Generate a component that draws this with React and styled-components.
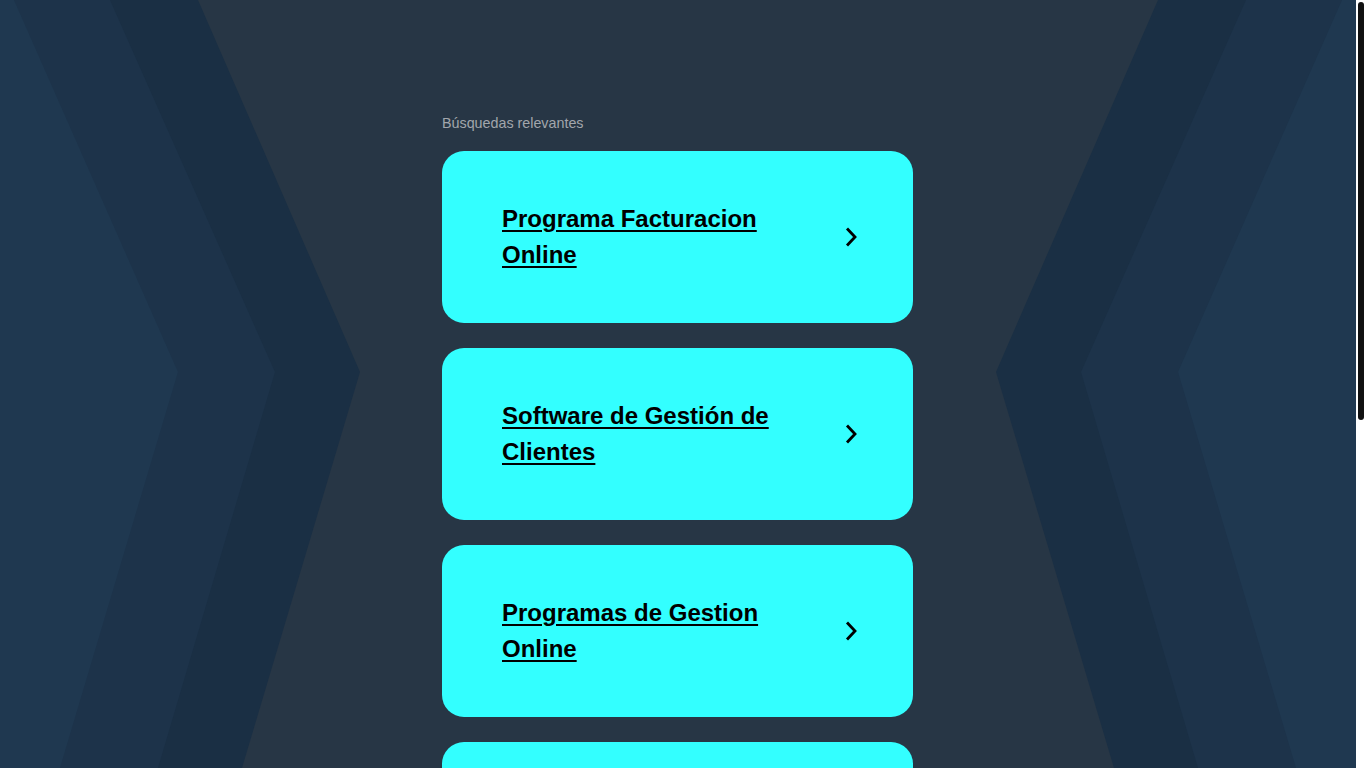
import React from "react";
import styled, { createGlobalStyle } from "styled-components";

const Global = createGlobalStyle`
  html, body { margin: 0; padding: 0; height: 100%; overflow: hidden; }
  body {
    background: #273645;
    font-family: "Liberation Sans", Arial, sans-serif;
  }
`;

const Frame = styled.div`
  position: relative;
  height: 100vh;
  overflow: hidden;
  background: #273645;
`;

const Backdrop = styled.svg`
  position: absolute;
  top: 0;
  left: 0;
  width: calc(100% - 10px);
  height: 100%;
  pointer-events: none;
`;

const Scroller = styled.div`
  position: relative;
  height: 100%;
  overflow-y: auto;
  scrollbar-width: none;
  &::-webkit-scrollbar { display: none; }
`;

const Rail = styled.div`
  position: absolute;
  top: 0;
  right: 0;
  width: 10px;
  height: 100%;
  background: #ffffff;
  z-index: 2;
`;

const Thumb = styled.div`
  position: absolute;
  top: 2px;
  left: 2px;
  width: 6px;
  height: 418px;
  border-radius: 3px;
  background: #111111;
`;

const Page = styled.main`
  display: flex;
  justify-content: center;
  padding: 114px 11px 420px 0;
`;

const Column = styled.section`
  width: 471px;
  display: flex;
  flex-direction: column;
`;

const Heading = styled.div`
  font-size: 14.3px;
  line-height: 18px;
  color: #a2a6ac;
  margin-bottom: 19px;
`;

const List = styled.div`
  display: flex;
  flex-direction: column;
  gap: 25px;
`;

const Card = styled.a`
  box-sizing: border-box;
  height: 172px;
  border-radius: 22px;
  background: #33ffff;
  display: flex;
  align-items: center;
  justify-content: space-between;
  padding: 0 55px 0 60px;
  text-decoration: none;
  color: #000;
  cursor: pointer;
`;

const Title = styled.span`
  font-size: 24px;
  line-height: 36px;
  font-weight: 700;
  text-decoration: underline;
  text-underline-offset: 3px;
  text-decoration-thickness: 2px;
  max-width: 290px;
`;

const Arrow = () => (
  <svg width="14" height="22" viewBox="0 0 14 22" fill="none">
    <path d="M3 2.5 L11 11 L3 19.5" stroke="#000" strokeWidth="2.8" />
  </svg>
);

const items = [
  "Programa Facturacion Online",
  "Software de Gestión de Clientes",
  "Programas de Gestion Online",
  "Software de Facturación Gratis",
  "Gestión de Inventario Online",
];

export default function App() {
  return (
    <Frame>
      <Global />
      <Backdrop viewBox="0 0 1356 768" preserveAspectRatio="none">
        <polygon points="0,0 198,0 360,372 242,768 0,768" fill="#1a2f44" />
        <polygon points="0,0 110,0 275,372 158,768 0,768" fill="#1d334a" />
        <polygon points="0,0 14,0 178,372 60,768 0,768" fill="#1f3850" />
        <polygon points="1356,0 1158,0 996,372 1114,768 1356,768" fill="#1a2f44" />
        <polygon points="1356,0 1246,0 1081,372 1198,768 1356,768" fill="#1d334a" />
        <polygon points="1356,0 1342,0 1178,372 1296,768 1356,768" fill="#1f3850" />
      </Backdrop>
      <Scroller>
        <Page>
          <Column>
            <Heading>Búsquedas relevantes</Heading>
            <List>
              {items.map((t) => (
                <Card key={t}>
                  <Title>{t}</Title>
                  <Arrow />
                </Card>
              ))}
            </List>
          </Column>
        </Page>
      </Scroller>
      <Rail>
        <Thumb />
      </Rail>
    </Frame>
  );
}
